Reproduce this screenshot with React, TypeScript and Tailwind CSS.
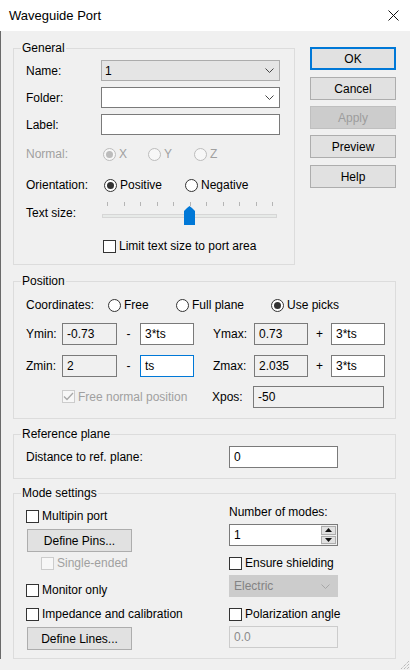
import React from 'react';

const Chevron = ({ color = '#444' }: { color?: string }) => (
  <svg width="9" height="5" viewBox="0 0 9 5" className="shrink-0">
    <path d="M0.5 0.5 L4.5 4.5 L8.5 0.5" fill="none" stroke={color} strokeWidth="1" />
  </svg>
);

const Group = ({ title, className, children }: { title: string; className?: string; children?: React.ReactNode }) => (
  <div className={`relative border border-[#dcdcdc] ${className ?? ''}`}>
    <span className="absolute -top-[8px] left-[7px] bg-[#f0f0f0] px-[1px] leading-[14px]">{title}</span>
    {children}
  </div>
);

const Radio = ({ checked, disabled, label, className }: { checked?: boolean; disabled?: boolean; label: string; className?: string }) => (
  <div className={`flex items-center gap-[3px] whitespace-nowrap ${className ?? ''}`}>
    <span
      className={`w-[13px] h-[13px] shrink-0 rounded-full border flex items-center justify-center ${
        disabled ? 'border-[#bcbcbc] bg-[#f7f7f7]' : 'border-[#333] bg-white'
      }`}
    >
      {checked && <span className={`w-[7px] h-[7px] rounded-full ${disabled ? 'bg-[#bcbcbc]' : 'bg-[#333]'}`} />}
    </span>
    <span className={disabled ? 'text-[#a0a0a0]' : ''}>{label}</span>
  </div>
);

const Check = ({ checked, disabled, label, className }: { checked?: boolean; disabled?: boolean; label: string; className?: string }) => (
  <div className={`flex items-center gap-[3px] h-[16px] whitespace-nowrap ${className ?? ''}`}>
    <span
      className={`w-[13px] h-[13px] shrink-0 border flex items-center justify-center ${
        disabled ? 'border-[#cccccc] bg-[#f7f7f7]' : 'border-[#333] bg-white'
      }`}
    >
      {checked && (
        <svg width="11" height="9" viewBox="0 0 11 9">
          <path d="M1 4.5 L4 7.5 L10 1" fill="none" stroke="#a8a8a8" strokeWidth="1.3" />
        </svg>
      )}
    </span>
    <span className={disabled ? 'text-[#a0a0a0]' : ''}>{label}</span>
  </div>
);

const Btn = ({ label, className }: { label: string; className?: string }) => (
  <div className={`h-[23px] flex items-center justify-center bg-[#e1e1e1] border border-[#adadad] ${className ?? ''}`}>{label}</div>
);

const Box = ({ value, kind = 'white', className }: { value?: string; kind?: 'white' | 'ro' | 'focus' | 'off'; className?: string }) => {
  const styles = {
    white: 'bg-white border-[#7a7a7a]',
    ro: 'bg-[#f0f0f0] border-[#7a7a7a]',
    focus: 'bg-white border-[#0078d7]',
    off: 'bg-[#f0f0f0] border-[#cccccc] text-[#8b8b8b]',
  }[kind];
  return <div className={`h-[22px] border flex items-center pl-[4px] ${styles} ${className ?? ''}`}>{value}</div>;
};

const Slider = () => {
  const ticks = Array.from({ length: 11 }, (_, i) => 6 + i * 16.5);
  return (
    <svg width="178" height="30" viewBox="0 0 178 30">
      {ticks.map((x) => (
        <line key={x} x1={Math.round(x) + 0.5} y1="4" x2={Math.round(x) + 0.5} y2="8" stroke="#b5b5b5" />
      ))}
      <rect x="1.5" y="16.5" width="174" height="3" fill="#e7eae8" stroke="#d6d6d6" />
      <path d="M83 13 L86 10 L88.5 8 L91 10 L94 13 L94 27 L83 27 Z" fill="#0078d7" />
    </svg>
  );
};

export default function App() {
  return (
    <div className="w-[410px] h-[670px] bg-[#f0f0f0] overflow-hidden relative font-['Liberation_Sans',Arial,sans-serif] text-[12px] text-black leading-[14px]">
      {/* title bar */}
      <div className="h-[31px] bg-white flex items-center justify-between pl-[9px] pr-[11px]">
        <span className="text-[13px]">Waveguide Port</span>
        <svg width="11" height="11" viewBox="0 0 11 11">
          <path d="M0.5 0.5 L10.5 10.5 M10.5 0.5 L0.5 10.5" stroke="#111" strokeWidth="1" />
        </svg>
      </div>

      <div className="border-l border-[#6a6a6a] pl-[12px] pt-[16px] flex flex-col">
        {/* top section */}
        <div className="flex items-start">
          <Group title="General" className="w-[282px] h-[217px] mt-[1px]">
            <div className="flex flex-col pl-[12px]">
              <div className="flex items-center h-[21px] mt-[11px]">
                <span className="w-[75px]">Name:</span>
                <div className="w-[179px] h-[21px] bg-[#e5e5e5] border border-[#acacac] flex items-center justify-between pl-[3px] pr-[5px]">
                  <span>1</span>
                  <Chevron />
                </div>
              </div>
              <div className="flex items-center h-[21px] mt-[6px]">
                <span className="w-[75px]">Folder:</span>
                <div className="w-[179px] h-[21px] bg-white border border-[#7a7a7a] flex items-center justify-end pr-[5px]">
                  <Chevron />
                </div>
              </div>
              <div className="flex items-center h-[21px] mt-[6px]">
                <span className="w-[75px]">Label:</span>
                <div className="w-[179px] h-[21px] bg-white border border-[#7a7a7a]" />
              </div>
              <div className="flex items-center h-[20px] mt-[9px]">
                <span className="w-[77px] text-[#a0a0a0]">Normal:</span>
                <Radio checked disabled label="X" className="w-[45px]" />
                <Radio disabled label="Y" className="w-[46px]" />
                <Radio disabled label="Z" />
              </div>
              <div className="flex items-center h-[20px] mt-[11px]">
                <span className="w-[78px]">Orientation:</span>
                <Radio checked label="Positive" className="w-[81px]" />
                <Radio label="Negative" />
              </div>
              <div className="flex items-center h-[30px] mt-[3px]">
                <span className="w-[75px]">Text size:</span>
                <Slider />
              </div>
              <Check label="Limit text size to port area" className="ml-[77px] mt-[10px]" />
            </div>
          </Group>

          <div className="ml-[15px] w-[86px] flex flex-col">
            <div className="h-[23px] flex items-center justify-center bg-[#e1e1e1] border-2 border-[#0078d7]">OK</div>
            <Btn label="Cancel" className="mt-[7px]" />
            <div className="h-[23px] mt-[6px] flex items-center justify-center bg-[#cccccc] border border-[#bfbfbf] text-[#9d9d9d]">Apply</div>
            <Btn label="Preview" className="mt-[6px]" />
            <Btn label="Help" className="mt-[7px]" />
          </div>
        </div>

        {/* position */}
        <Group title="Position" className="w-[383px] h-[138px] mt-[16px]">
          <div className="flex flex-col pl-[12px]">
            <div className="flex items-center h-[16px] mt-[15px]">
              <span className="w-[82px]">Coordinates:</span>
              <Radio label="Free" className="w-[68px]" />
              <Radio label="Full plane" className="w-[95px]" />
              <Radio checked label="Use picks" />
            </div>
            <div className="flex items-center h-[22px] mt-[10px]">
              <span className="w-[36px]">Ymin:</span>
              <Box kind="ro" value="-0.73" className="w-[55px]" />
              <span className="w-[23px] text-center">-</span>
              <Box value="3*ts" className="w-[54px]" />
              <span className="w-[19px]" />
              <span className="w-[41px]">Ymax:</span>
              <Box kind="ro" value="0.73" className="w-[54px]" />
              <span className="w-[23px] text-center">+</span>
              <Box value="3*ts" className="w-[54px]" />
            </div>
            <div className="flex items-center h-[22px] mt-[10px]">
              <span className="w-[36px]">Zmin:</span>
              <Box kind="ro" value="2" className="w-[55px]" />
              <span className="w-[23px] text-center">-</span>
              <Box kind="focus" value="ts" className="w-[54px]" />
              <span className="w-[19px]" />
              <span className="w-[41px]">Zmax:</span>
              <Box kind="ro" value="2.035" className="w-[54px]" />
              <span className="w-[23px] text-center">+</span>
              <Box value="3*ts" className="w-[54px]" />
            </div>
            <div className="flex items-center h-[21px] mt-[9px]">
              <span className="w-[36px]" />
              <Check checked disabled label="Free normal position" className="w-[150px]" />
              <span className="w-[41px]">Xpos:</span>
              <Box kind="ro" value="-50" className="w-[131px] h-[21px]" />
            </div>
          </div>
        </Group>

        {/* reference plane */}
        <Group title="Reference plane" className="w-[383px] h-[45px] mt-[15px]">
          <div className="flex items-center h-[22px] mt-[11px] pl-[12px]">
            <span className="w-[203px]">Distance to ref. plane:</span>
            <Box value="0" className="w-[109px]" />
          </div>
        </Group>

        {/* mode settings */}
        <Group title="Mode settings" className="w-[383px] h-[166px] mt-[14px]">
          <div className="flex pl-[12px]">
            <div className="w-[203px] flex flex-col">
              <Check label="Multipin port" className="mt-[14px]" />
              <Btn label="Define Pins..." className="w-[105px] ml-[1px] mt-[5px]" />
              <Check disabled label="Single-ended" className="ml-[15px] mt-[3px]" />
              <Check label="Monitor only" className="mt-[11px]" />
              <Check label="Impedance and calibration" className="mt-[8px]" />
              <Btn label="Define Lines..." className="w-[105px] ml-[1px] mt-[5px]" />
            </div>
            <div className="w-[109px] flex flex-col">
              <div className="h-[16px] mt-[10px] flex items-center whitespace-nowrap">Number of modes:</div>
              <div className="h-[22px] mt-[4px] flex border border-[#7a7a7a] bg-white">
                <div className="flex-1 flex items-center pl-[4px]">1</div>
                <div className="w-[16px] flex flex-col bg-[#f0f0f0] pt-[1px] pr-[1px] gap-[1px]">
                  <div className="flex-1 bg-[#e1e1e1] border border-[#adadad] flex items-center justify-center">
                    <svg width="7" height="4" viewBox="0 0 7 4"><path d="M3.5 0 L7 4 L0 4 Z" fill="#111" /></svg>
                  </div>
                  <div className="flex-1 bg-[#e1e1e1] border border-[#adadad] flex items-center justify-center mb-[1px]">
                    <svg width="7" height="4" viewBox="0 0 7 4"><path d="M0 0 L7 0 L3.5 4 Z" fill="#111" /></svg>
                  </div>
                </div>
              </div>
              <Check label="Ensure shielding" className="mt-[9px]" />
              <div className="h-[22px] mt-[4px] bg-[#cccccc] border border-[#cccccc] flex items-center justify-between pl-[4px] pr-[7px] text-[#838383]">
                <span>Electric</span>
                <Chevron color="#a6a6a6" />
              </div>
              <Check label="Polarization angle" className="mt-[9px]" />
              <Box kind="off" value="0.0" className="mt-[4px]" />
            </div>
          </div>
        </Group>
      </div>

      {/* resize grip */}
      <svg width="12" height="12" viewBox="0 0 12 12" className="absolute right-0 bottom-0">
        <path d="M11 3 L3 11 M11 6 L6 11 M11 9 L9 11" stroke="#a0a0a0" strokeWidth="1" strokeDasharray="1 1" />
      </svg>
    </div>
  );
}
